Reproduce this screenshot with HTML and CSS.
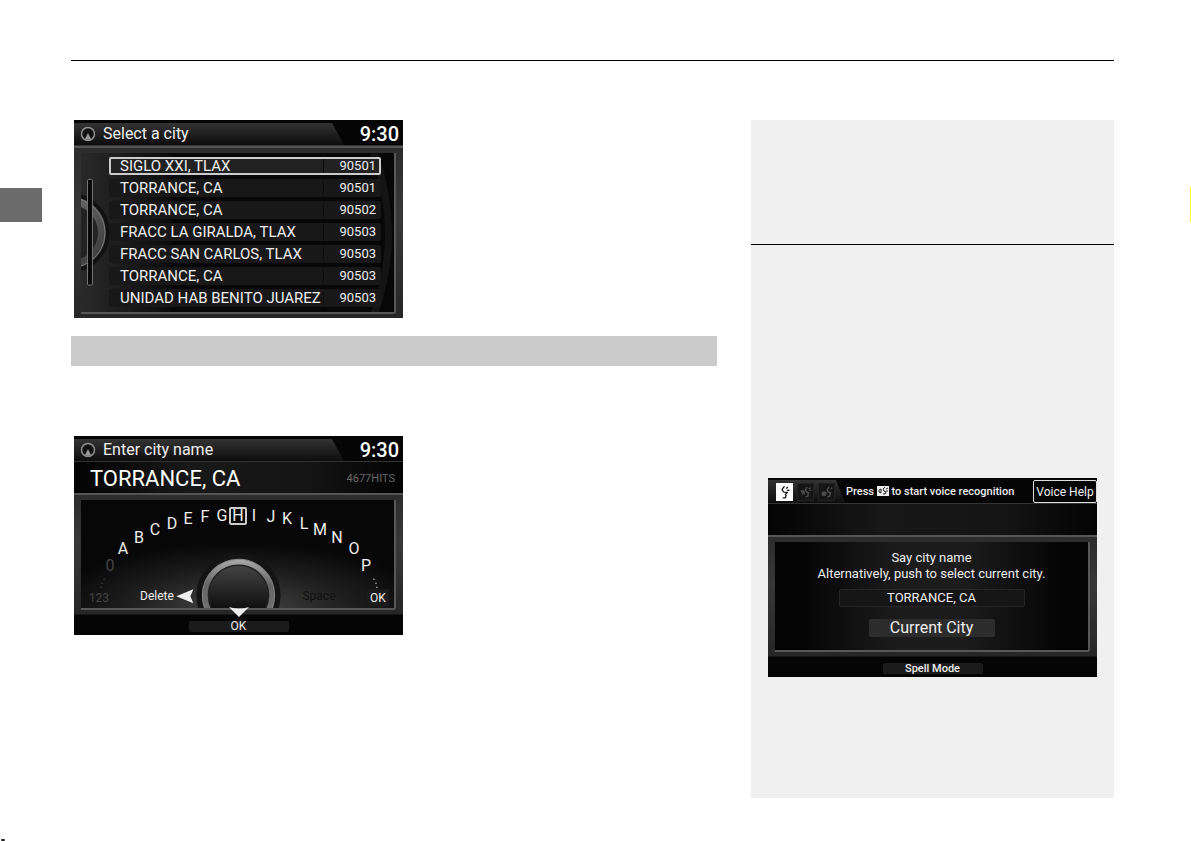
FILE: index.html
```html
<!DOCTYPE html>
<html lang="en">
<head>
<meta charset="utf-8">
<meta name="viewport" content="width=device-width, initial-scale=1">
<title>Select a city</title>
<link rel="stylesheet" href="styles.css">
</head>
<body>
<div class="page">
  <div class="rail rail-left"><span class="tab"></span><span class="speck"></span></div>
  <main class="sheet">
    <div class="columns">
      <div class="content">
        <section class="screen">
          <header class="topbar">
            <div class="title-tab">
              <svg class="compass" viewBox="0 0 16 16"><circle cx="8" cy="8" r="6.5"/><path d="M8 7l3 6a6 6 0 0 1-6 0z"/></svg>
              <h2>Select a city</h2>
            </div>
            <time>9:30</time>
          </header>
          <div class="frame">
            <div class="panel list-panel">
              <svg class="art" viewBox="0 0 314 161" preserveAspectRatio="xMinYMin slice">
                <defs>
                  <linearGradient id="knob" x1="0" y1="0" x2="1" y2="1"><stop offset="0" stop-color="#777"/><stop offset=".55" stop-color="#555"/><stop offset="1" stop-color="#383838"/></linearGradient>
                  <linearGradient id="side" x1="0" x2="1" y1="0" y2="0"><stop offset="0" stop-color="#292929"/><stop offset="1" stop-color="#0c0c0c"/></linearGradient>
                </defs>
                <rect width="90" height="162" fill="url(#side)"/>
                <circle cx="-11" cy="80" r="40" fill="#111"/>
                <circle cx="-11" cy="80" r="32" fill="#222" stroke="url(#knob)" stroke-width="8"/>
                <circle cx="-11" cy="80" r="35" fill="none" stroke="#777"/>
                <path d="M290 0Q320 81 290 162H298Q326 81 298 0Z" fill="#141414"/>
                <rect x="6.5" y="26.5" width="5" height="106" rx="1" fill="#080808" stroke="#777"/>
              </svg>
              <div class="city-list">
                <button class="city selected"><span>SIGLO XXI, TLAX</span><span class="zip">90501</span></button>
                <button class="city"><span>TORRANCE, CA</span><span class="zip">90501</span></button>
                <button class="city"><span>TORRANCE, CA</span><span class="zip">90502</span></button>
                <button class="city"><span>FRACC LA GIRALDA, TLAX</span><span class="zip">90503</span></button>
                <button class="city"><span>FRACC SAN CARLOS, TLAX</span><span class="zip">90503</span></button>
                <button class="city"><span>TORRANCE, CA</span><span class="zip">90503</span></button>
                <button class="city"><span>UNIDAD HAB BENITO JUAREZ</span><span class="zip">90503</span></button>
              </div>
            </div>
          </div>
        </section>

        <div class="band"></div>

        <section class="screen">
          <header class="topbar">
            <div class="title-tab">
              <svg class="compass" viewBox="0 0 16 16"><circle cx="8" cy="8" r="6.5"/><path d="M8 7l3 6a6 6 0 0 1-6 0z"/></svg>
              <h2>Enter city name</h2>
            </div>
            <time>9:30</time>
          </header>
          <div class="banner"><strong>TORRANCE, CA</strong><span>4677HITS</span></div>
          <div class="frame">
            <div class="panel dial-panel">
              <svg class="art" viewBox="0 0 312 108" preserveAspectRatio="xMidYMin slice">
                <defs>
                  <radialGradient id="glow" cx=".5" cy="1" r=".62"><stop offset="0" stop-color="#484848"/><stop offset=".6" stop-color="#1c1c1c"/><stop offset="1" stop-color="#070707"/></radialGradient>
                  <linearGradient id="ring" x1="0" y1="0" x2="0" y2="1"><stop offset="0" stop-color="#aaa"/><stop offset=".35" stop-color="#666"/><stop offset="1" stop-color="#777"/></linearGradient>
                  <linearGradient id="cap" x1="0" y1="0" x2="0" y2="1"><stop offset="0" stop-color="#444"/><stop offset=".8" stop-color="#090909"/></linearGradient>
                </defs>
                <rect width="314" height="110" fill="url(#glow)"/>
                <circle cx="157" cy="95" r="42" fill="#141414"/>
                <circle cx="157" cy="95" r="36" fill="url(#ring)" stroke="#888"/>
                <circle cx="157" cy="95" r="30" fill="url(#cap)" stroke="#222" stroke-width="1.5"/>
                <path d="M95 96l17-7-3 7 3 7z" fill="#eee"/>
                <g fill="#444"><circle cx="23" cy="79" r=".7"/><circle cx="21" cy="83" r=".7"/><circle cx="20" cy="87" r=".7"/></g>
                <g fill="#ccc"><circle cx="292" cy="79" r=".7"/><circle cx="294" cy="83" r=".7"/><circle cx="295" cy="87" r=".7"/></g>
              </svg>
              <div class="keys">
                <button class="dim">0</button><button>A</button><button>B</button><button>C</button><button>D</button><button>E</button><button>F</button><button>G</button><button class="current">H</button><button>I</button><button>J</button><button>K</button><button>L</button><button>M</button><button>N</button><button>O</button><button>P</button><button class="word ok">OK</button><button class="word dim">123</button><button class="word">Delete</button><button class="word faint">Space</button>
              </div>
            </div>
          </div>
          <footer class="softkeys">
            <svg class="pointer" viewBox="0 0 20 10"><path d="M0 0q10 3 20 0L10 10z"/></svg>
            <button>OK</button>
          </footer>
        </section>
      </div>

      <aside class="notes">
        <div class="note-head"></div>
        <section class="screen">
          <header class="topbar voice-bar">
            <div class="title-tab modes">
              <svg class="mode on" viewBox="0 0 18 18"><path d="M9 2L6 6l2 3 4 1-2 2 1 1-1 3H7M11 5l2-2M12 7h3M11 9l2 1"/></svg>
              <svg class="mode" viewBox="0 0 18 18"><path d="M11 3L9 6l1 3 3 1-1 2v2l-3 1M13 5l2-1M14 7h2"/><path d="M3 7h5v5H5z" class="solid"/></svg>
              <svg class="mode" viewBox="0 0 18 18"><path d="M12 3l-2 3 1 3 3 1-1 2v2l-3 1M14 5l2-1"/><circle cx="6" cy="11" r="3" class="solid"/></svg>
            </div>
            <p class="prompt">Press <svg viewBox="0 0 12 10"><rect width="12" height="10"/><path d="M8 1L6 3l1 2 2 1-1 2H6M9 3l2-1M9 5h2M2 4l2-1v4L2 6z"/></svg> to start voice recognition</p>
            <button class="help">Voice Help</button>
          </header>
          <div class="banner"></div>
          <div class="frame">
            <div class="panel voice-panel">
              <p>Say city name<br>Alternatively, push to select current city.</p>
              <output>TORRANCE, CA</output>
              <button>Current City</button>
            </div>
          </div>
          <footer class="softkeys"><button class="strong">Spell Mode</button></footer>
        </section>
      </aside>
    </div>
  </main>
  <div class="rail rail-right"><span class="mark"></span></div>
</div>
</body>
</html>
```

FILE: styles.css
```css
* { box-sizing: border-box; }
body { margin: 0; background: #fff; font-family: Roboto, "Liberation Sans", sans-serif; }
button { margin: 0; padding: 0; border: 0; background: none; color: inherit; font: inherit; }
h2, p { margin: 0; font-weight: 400; }

.page { display: grid; grid-template-columns: 71px 1fr 77px; min-height: 100vh; }
.rail { display: flex; flex-direction: column; justify-content: space-between; }
.rail-left { padding-top: 188px; align-items: flex-start; }
.tab { width: 42px; height: 34px; background: #6b6b6b; }
.speck { width: 4px; height: 2px; margin-left: 1px; background: #222; border-radius: 1px; }
.rail-right { padding-top: 187px; align-items: flex-end; }
.mark { width: 1px; height: 35px; background: #ff3; }

.sheet { display: flex; flex-direction: column; padding: 60px 0 43px; }
.columns {
  flex: 1;
  display: grid;
  grid-template-columns: 646fr 363fr;
  gap: 34px;
  border-top: 1px solid #000;
  padding-top: 59px;
}
.content .screen { margin-left: 3px; }
.band { height: 30px; margin: 18px 0 70px; background: #cbcbcb; }
.notes { background: #f0f0f0; }
.note-head { height: 125px; margin-bottom: 233px; border-bottom: 1px solid #000; }
.notes .screen { margin-left: 17px; }

.screen { width: 329px; max-width: 100%; background: #050505; color: #eee; overflow: hidden; }
.topbar {
  display: flex;
  justify-content: space-between;
  align-items: center;
  height: 26px;
  padding-top: 3px;
  border-bottom: 1px solid #333;
}
.title-tab {
  display: flex;
  align-items: center;
  gap: 7px;
  align-self: stretch;
  width: 270px;
  padding-left: 6px;
  background: linear-gradient(#333, #0d0d0d);
  clip-path: polygon(0 0, 258px 0, 100% 100%, 0 100%);
}
.title-tab h2 { font-size: 16px; line-height: 22px; }
.compass { width: 16px; height: 16px; }
.compass circle { fill: #111; stroke: #909090; stroke-width: 1.5; }
.compass path { fill: #999; }
.topbar time { padding-right: 4px; font-size: 20px; line-height: 22px; font-weight: 500; color: #fff; }

.frame {
  padding: 5px 7px 4px;
  background: linear-gradient(#2c2c2c, #383838 40%, #262626);
  border-top: 2px solid #555;
}
.panel { position: relative; background: #070707; border: solid #585858; border-width: 0 2px 2px 0; border-radius: 0 0 3px 0; overflow: hidden; }
.art { position: absolute; top: 0; left: 0; width: 100%; height: 100%; }

.list-panel { height: 161px; padding: 4px 13px 0 28px; }
.city-list { position: relative; display: grid; gap: 4px; }
.city {
  display: grid;
  grid-template-columns: 1fr 53px;
  align-items: center;
  height: 18px;
  padding: 0 4px 0 10px;
  border: 1px solid transparent;
  border-radius: 2px;
  background: #181818;
  font-size: 15px;
  line-height: 16px;
  text-align: left;
  white-space: nowrap;
}
.city.selected { background: #222; border: 2px solid #ccc; padding: 0 3px 0 9px; line-height: 14px; }
.zip { border-left: 1px solid #0c0c0c; font-size: 13px; line-height: 14px; text-align: right; }

.banner {
  display: flex;
  justify-content: space-between;
  align-items: center;
  height: 31px;
  padding: 2px 8px 0 16px;
  background: linear-gradient(90deg, #030303, #181818 35%, #151515 70%, #030303);
}
.banner strong { font-size: 22px; line-height: 28px; font-weight: 400; color: #fff; }
.banner span { font-size: 11px; color: #666; }

.dial-panel { height: 110px; }
.keys button {
  position: absolute;
  width: 18px;
  height: 18px;
  margin: -9px 0 0 -9px;
  font-size: 16px;
  line-height: 18px;
  text-align: center;
}
.keys .word { width: 40px; margin-left: -20px; font-size: 12px; }
.keys .ok { width: 22px; margin-left: -11px; background: #1b1b1b; border-radius: 2px; }
.keys .dim { color: #444; }
.keys .faint { color: #111; }
.keys .current { border: 2px solid #ccc; border-radius: 2px; line-height: 14px; }
.keys :nth-child(1) { left: 29px; top: 66px; }
.keys :nth-child(2) { left: 42px; top: 49px; }
.keys :nth-child(3) { left: 58px; top: 38px; }
.keys :nth-child(4) { left: 74px; top: 30px; }
.keys :nth-child(5) { left: 91px; top: 24px; }
.keys :nth-child(6) { left: 107px; top: 19px; }
.keys :nth-child(7) { left: 124px; top: 17px; }
.keys :nth-child(8) { left: 141px; top: 16px; }
.keys :nth-child(9) { left: 157px; top: 16px; }
.keys :nth-child(10) { left: 173px; top: 16px; }
.keys :nth-child(11) { left: 190px; top: 17px; }
.keys :nth-child(12) { left: 206px; top: 19px; }
.keys :nth-child(13) { left: 223px; top: 24px; }
.keys :nth-child(14) { left: 239px; top: 30px; }
.keys :nth-child(15) { left: 256px; top: 38px; }
.keys :nth-child(16) { left: 273px; top: 49px; }
.keys :nth-child(17) { left: 285px; top: 66px; }
.keys :nth-child(18) { left: 297px; top: 98px; }
.keys :nth-child(19) { left: 18px; top: 98px; }
.keys :nth-child(20) { left: 76px; top: 96px; }
.keys :nth-child(21) { left: 238px; top: 96px; }

.softkeys { position: relative; display: flex; justify-content: center; height: 21px; padding-top: 6px; border-top: 1px solid #161616; }
.softkeys button { width: 100px; height: 11px; border-radius: 2px; background: #1b1b1b; font-size: 12px; line-height: 11px; }
.softkeys .strong { font-size: 11px; font-weight: 500; }
.softkeys .pointer { position: absolute; top: -8px; left: 50%; width: 20px; height: 10px; margin-left: -10px; }
.screen:has(.pointer) .softkeys { overflow: visible; }
.pointer path { fill: #eee; }

.voice-bar { justify-content: flex-start; padding-top: 2px; }
.modes { width: 77px; gap: 4px; padding-left: 8px; clip-path: polygon(0 0, 68px 0, 100% 100%, 0 100%); }
.mode { width: 17px; height: 18px; background: #151515; border: 1px solid #222; }
.mode path, .prompt path { fill: none; stroke: #555; stroke-width: 1.5; }
.mode .solid { fill: #4a4a4a; stroke: none; }
.mode.on { background: #fff; border-color: #fff; }
.mode.on path { stroke: #111; }
.prompt { flex: 1; padding-left: 1px; font-size: 11px; line-height: 22px; font-weight: 500; white-space: nowrap; }
.prompt svg { width: 12px; height: 10px; vertical-align: -1px; }
.prompt rect { fill: #eee; }
.prompt path { stroke: #222; stroke-width: 1; }
.help { width: 64px; height: 23px; border: 1px solid #ddd; border-radius: 2px; font-size: 12px; white-space: nowrap; }
.voice-panel {
  display: flex;
  flex-direction: column;
  align-items: center;
  height: 110px;
  padding-top: 8px;
  background: linear-gradient(90deg, #040404 8%, #1c1c1c 40%, #1c1c1c 60%, #040404 92%);
  font-size: 13px;
  line-height: 16px;
  text-align: center;
}
.voice-panel p { white-space: nowrap; }
.voice-panel output { width: 186px; height: 18px; margin: 7px 0 12px; border: 1px solid #262626; border-radius: 2px; background: #161616; }
.voice-panel button { width: 126px; height: 18px; border-radius: 2px; background: #2c2c2c; font-size: 16px; line-height: 18px; }
```
